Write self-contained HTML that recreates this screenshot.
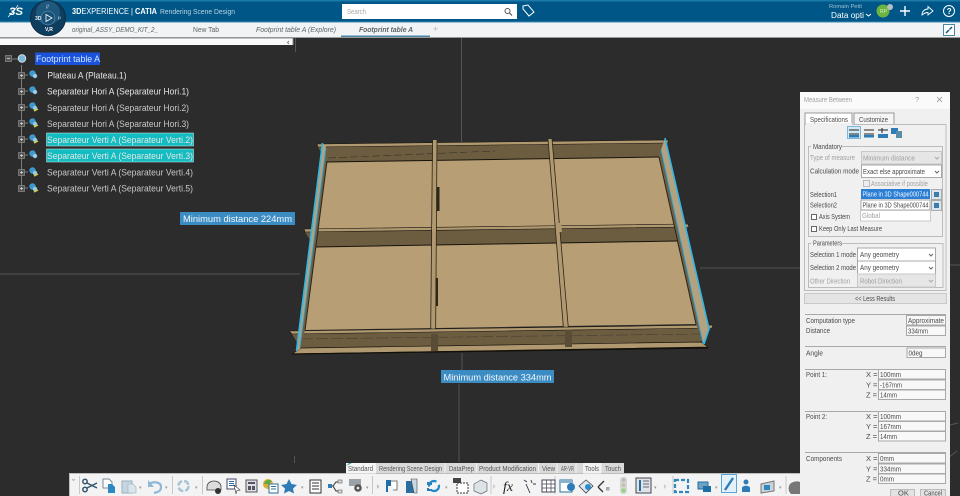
<!DOCTYPE html>
<html><head><meta charset="utf-8"><style>
html,body{margin:0;padding:0;width:960px;height:496px;overflow:hidden;background:#2c2c2c}
svg{display:block;filter:blur(.35px);font-family:"Liberation Sans",sans-serif;font-size:8px}
.t{fill:#e6e6e6;font-size:9.5px}
.d{fill:#4a4a4a;font-size:7.5px}
.g{fill:#a0a0a0;font-size:7.5px}
.i{fill:#5d6468;font-style:italic;font-size:7.5px}
.tb{fill:#555;font-size:7px}
.f{fill:#fff;stroke:#a8a8a8;stroke-width:1}
.dis{fill:#e6e6e6;stroke:#c8c8c8;stroke-width:1}
.sep{stroke:#a8a8a8;stroke-width:1}
</style></head><body>
<svg width="960" height="496" viewBox="0 0 960 496" xmlns="http://www.w3.org/2000/svg">
<rect width="960" height="496" fill="#2c2c2c"/>
<!-- viewport axes -->
<g stroke="#555" stroke-width="1" fill="none">
<path d="M461.500 38V142M462 353V370M459 384V462M294.500 456V463"/>
<path d="M0 274H300M700 268H800M945 265H960"/>
<path d="M295.500 38V52M950 425l8-2M948 458l9-7"/>
</g>
<!-- header -->
<rect width="960" height="22" fill="#005686"/>
<rect width="960" height="1.500" fill="#1a7aa8"/>
<rect y="22" width="960" height="15" fill="#f1f3f5"/>
<rect y="21.500" width="960" height="1" fill="#3e8fb5"/>
<rect y="37" width="960" height="1" fill="#9a9a9a"/>
<rect y="38" width="293" height="7" fill="#fafafa"/>
<path d="M0 38H293V45" fill="none" stroke="#8c8c8c"/>
<path d="M289 41l-1.500 1.500 1.500 1.500" stroke="#555" fill="none" stroke-width=".7"/>
<!-- 3DS logo -->
<text x="9" y="15" fill="#fff" font-size="11" font-style="italic" font-weight="bold" textLength="14" lengthAdjust="spacingAndGlyphs">3S</text>
<path d="M8 17c3-3 8-8 10-12" stroke="#fff" fill="none" stroke-width=".8"/>
<!-- compass -->
<circle cx="48" cy="18" r="17.500" fill="#0f3d5e" stroke="#0a2c46"/>
<circle cx="48" cy="13" r="12" fill="#2a6b93" opacity=".6"/>
<circle cx="48" cy="18" r="7" fill="#184f75" stroke="#6fa5c4" stroke-width=".5"/>
<path d="M46 14.500v7l6-3.500z" fill="none" stroke="#fff" stroke-width=".8"/>
<text x="35" y="20" fill="#e4eef4" font-size="5" font-weight="bold">3D</text>
<text x="58" y="20" fill="#e4eef4" font-size="5">i³</text>
<text x="46" y="8.500" fill="#cfe0ea" font-size="5">//</text>
<text x="45" y="31" fill="#fff" font-size="5" font-weight="bold">V,R</text>
<!-- top texts -->
<text x="72" y="14" fill="#fff" font-size="8" textLength="85" lengthAdjust="spacingAndGlyphs"><tspan font-weight="bold">3D</tspan>EXPERIENCE | <tspan font-weight="bold">CATIA</tspan></text>
<text x="160" y="14" fill="#b9d3e2" font-size="7.500" textLength="75" lengthAdjust="spacingAndGlyphs">Rendering Scene Design</text>
<rect x="342" y="4" width="175" height="15" fill="#fff"/>
<text x="347" y="14" fill="#a8a8a8" font-size="7" textLength="19" lengthAdjust="spacingAndGlyphs">Search</text>
<circle cx="507.500" cy="11" r="2.500" fill="none" stroke="#555" stroke-width="1"/><path d="M509.500 13l2.500 2.500" stroke="#555" stroke-width="1.200"/>
<path d="M523 6l5-1 6 7-5 4-6-7z" fill="none" stroke="#fff" stroke-width="1"/>
<text x="829" y="8" fill="#9fc2d6" font-size="5" textLength="33" lengthAdjust="spacingAndGlyphs">Romain Petit</text>
<text x="831" y="18" fill="#fff" font-size="8" textLength="33" lengthAdjust="spacingAndGlyphs">Data opti</text>
<path d="M866 14l2.500 2 2.500-2" stroke="#fff" fill="none"/>
<circle cx="883" cy="11" r="6.500" fill="#6db33f"/>
<text x="880" y="13" fill="#d5ecc4" font-size="5">RP</text>
<circle cx="890" cy="7" r="3" fill="#b8c0c4"/>
<path d="M905 6v10M900 11h10" stroke="#fff" stroke-width="1.400"/>
<path d="M922 15c0-4 3-6 6-6V6.500l5 4.500-5 4V12.500c-3 0-4 1-6 2.500z" fill="none" stroke="#fff" stroke-width=".9"/>
<circle cx="949" cy="11" r="5.500" fill="none" stroke="#fff" stroke-width="1"/>
<text x="946.800" y="14" fill="#fff" font-size="8" font-weight="bold">?</text>
<!-- tabs -->
<text class="i" x="72" y="32" textLength="86" lengthAdjust="spacingAndGlyphs">original_ASSY_DEMO_KIT_2_</text>
<text x="193" y="32" fill="#5d6468" font-size="7.500" textLength="26" lengthAdjust="spacingAndGlyphs">New Tab</text>
<text class="i" x="256" y="32" textLength="80" lengthAdjust="spacingAndGlyphs">Footprint table A (Explore)</text>
<text class="i" x="359" y="32" font-weight="bold" textLength="54" lengthAdjust="spacingAndGlyphs">Footprint table A</text>
<text x="433" y="32" fill="#b5b5b5" font-size="9">+</text>
<rect x="341" y="35.500" width="89" height="1.500" fill="#4a86a8"/>
<rect x="943.500" y="24.500" width="11" height="11" fill="#fff" stroke="#4a86a8"/>
<path d="M946 33l3-3M952 27l-2.500 2.500" stroke="#0b5a8a" stroke-width="1.500"/>
<!-- tree -->
<g stroke="#7a7a7a" stroke-width="1" fill="none">
<path d="M21.500 65V188M21.500 75H28M21.500 91H28M21.500 107H28M21.500 123H28M21.500 139H28M21.500 155H28M21.500 172H28M21.500 188H28M12 59H18"/>
</g>
<g fill="#555" stroke="#9a9a9a" stroke-width=".6">
<rect x="5.500" y="55.500" width="6" height="6"/>
<rect x="18.500" y="72.500" width="6" height="6"/><rect x="18.500" y="88.500" width="6" height="6"/><rect x="18.500" y="104.500" width="6" height="6"/><rect x="18.500" y="120.500" width="6" height="6"/><rect x="18.500" y="136.500" width="6" height="6"/><rect x="18.500" y="152.500" width="6" height="6"/><rect x="18.500" y="169.500" width="6" height="6"/><rect x="18.500" y="185.500" width="6" height="6"/>
</g>
<path d="M7 58.500h3M20 75.500h3M21.500 74v3M20 91.500h3M21.500 90v3M20 107.500h3M21.500 106v3M20 123.500h3M21.500 122v3M20 139.500h3M21.500 138v3M20 155.500h3M21.500 154v3M20 172.500h3M21.500 171v3M20 188.500h3M21.500 187v3" stroke="#ddd" stroke-width=".7"/>
<circle cx="22" cy="58.500" r="3.800" fill="#7fb7d8" stroke="#dfeef6" stroke-width=".8"/>
<g>
<circle cx="32.500" cy="73.500" r="3.200" fill="#3f98cc"/><circle cx="35" cy="76" r="2.200" fill="#9acbe6"/>
<circle cx="32.500" cy="89.500" r="3.200" fill="#3f98cc"/><circle cx="35" cy="92" r="2.200" fill="#9acbe6"/>
<circle cx="32.500" cy="105.500" r="3.200" fill="#3f98cc"/><circle cx="35" cy="108" r="2.200" fill="#9acbe6"/><path d="M34 111l4-2" stroke="#d9cf3a" stroke-width="1.500"/>
<circle cx="32.500" cy="121.500" r="3.200" fill="#3f98cc"/><circle cx="35" cy="124" r="2.200" fill="#9acbe6"/><path d="M34 127l4-2" stroke="#d9cf3a" stroke-width="1.500"/>
<circle cx="32.500" cy="137.500" r="3.200" fill="#3f98cc"/><circle cx="35" cy="140" r="2.200" fill="#9acbe6"/><path d="M34 143l4-2" stroke="#d9cf3a" stroke-width="1.500"/>
<circle cx="32.500" cy="153.500" r="3.200" fill="#3f98cc"/><circle cx="35" cy="156" r="2.200" fill="#9acbe6"/>
<circle cx="32.500" cy="170.500" r="3.200" fill="#3f98cc"/><circle cx="35" cy="173" r="2.200" fill="#9acbe6"/><path d="M34 176l4-2" stroke="#d9cf3a" stroke-width="1.500"/>
<circle cx="32.500" cy="186.500" r="3.200" fill="#3f98cc"/><circle cx="35" cy="189" r="2.200" fill="#9acbe6"/><path d="M34 192l4-2" stroke="#d9cf3a" stroke-width="1.500"/>
</g>
<rect x="35" y="52.500" width="65" height="12.500" fill="#1b52dc"/>
<rect x="46.500" y="133" width="147" height="13" fill="#12bcc0" stroke="#d8f2f2" stroke-width=".5"/>
<rect x="46.500" y="149" width="147" height="13" fill="#12bcc0" stroke="#d8f2f2" stroke-width=".5"/>
<text class="t" x="36" y="62" style="fill:#cfe6ff" textLength="64" lengthAdjust="spacingAndGlyphs">Footprint table A</text>
<text class="t" x="47.500" y="78.500" textLength="79" lengthAdjust="spacingAndGlyphs">Plateau A (Plateau.1)</text>
<text class="t" x="47" y="94.500" textLength="142" lengthAdjust="spacingAndGlyphs">Separateur Hori A (Separateur Hori.1)</text>
<text class="t" x="47" y="111" style="fill:#c8c8c8" textLength="142" lengthAdjust="spacingAndGlyphs">Separateur Hori A (Separateur Hori.2)</text>
<text class="t" x="47" y="127" style="fill:#c8c8c8" textLength="142" lengthAdjust="spacingAndGlyphs">Separateur Hori A (Separateur Hori.3)</text>
<text class="t" x="47" y="143" textLength="146" lengthAdjust="spacingAndGlyphs">Separateur Verti A (Separateur Verti.2)</text>
<text class="t" x="47" y="159" textLength="146" lengthAdjust="spacingAndGlyphs">Separateur Verti A (Separateur Verti.3)</text>
<text class="t" x="47" y="175.500" style="fill:#c8c8c8" textLength="146" lengthAdjust="spacingAndGlyphs">Separateur Verti A (Separateur Verti.4)</text>
<text class="t" x="47" y="191.500" style="fill:#c8c8c8" textLength="146" lengthAdjust="spacingAndGlyphs">Separateur Verti A (Separateur Verti.5)</text>
<!-- MODEL -->
<g stroke-linejoin="round">
<!-- floors -->
<polygon points="327,161 659,157 674,224 318,230" fill="#b89e74"/>
<polygon points="315,246 677,241 696,324 305,330" fill="#b89e74"/>
<!-- back wall -->
<polygon points="318,147 668,143 659,157 327,162" fill="#6c5d41"/>
<polygon points="317,144 668,140 668,143 318,147" fill="#b09970" stroke="#17130c" stroke-width=".5"/>
<path d="M327 162L659 157" stroke="#17130c" stroke-width="1"/>
<path d="M328 158L495 151" stroke="#3a3224" stroke-width=".6" stroke-dasharray="8 3"/>
<!-- middle wall -->
<polygon points="305,232 688,227 677,241 315,247" fill="#6c5d41"/>
<polygon points="304,229 688,224 689,227 305,232" fill="#b09970" stroke="#17130c" stroke-width=".6"/>
<path d="M315 247L677 241" stroke="#17130c" stroke-width="1"/>
<!-- separators -->
<polygon points="433,140 437,140 435,350 431,350" fill="#b09970"/>
<path d="M432.500 140L430.500 350M437 140L435.500 350" stroke="#2b2416" stroke-width=".8"/>
<rect x="437" y="187" width="2.500" height="24" fill="#2d2719"/>
<rect x="435.500" y="278" width="2.500" height="28" fill="#2d2719"/>
<polygon points="548,139 552,139 570,347 565,347" fill="#b09970"/>
<path d="M548 139L565 347M552 139L570 347" stroke="#2b2416" stroke-width=".8"/>
<!-- front wall -->
<polygon points="292,334 711,328 700,343 301,349" fill="#6c5d41"/>
<polygon points="289,331 713,325 712,328 292,334" fill="#b09970" stroke="#17130c" stroke-width=".6"/>
<polygon points="301,348 701,342 708,347 292,354" fill="#b09970" stroke="#17130c" stroke-width=".7"/>
<path d="M301 339L700 334" stroke="#4a4030" stroke-width=".6" stroke-dasharray="12 3"/>
<path d="M292 354L708 348" stroke="#120f08" stroke-width="1.200"/>
<polygon points="431,334 438,334 438,351 431,351" fill="#5a4d35"/>
<polygon points="565,330 572,330 572,347 565,347" fill="#5a4d35"/>
<polygon points="432,224 436,224 436,232 432,232" fill="#b09970"/>
<polygon points="557,223 561,223 562,232 558,232" fill="#b09970"/>
<!-- left side wall -->
<polygon points="322,143 327,161 305,330 300,350 296,351" fill="#6f6047"/>
<polygon points="322,143 326,146 300,349 296,351" fill="#b3a17f"/>
<path d="M322.500 143L296.500 351" stroke="#2fb7e6" stroke-width="1.600" fill="none"/>
<path d="M326 148L300 347" stroke="#22a4d4" stroke-width=".9" fill="none"/>
<path d="M327 161L305 330" stroke="#2b2416" stroke-width="1" fill="none"/>
<!-- right side wall -->
<polygon points="660,150 665,138 709,329 704,344 696,324 659,157" fill="#6f6047"/>
<polygon points="665,138 661,150 703,344 709,329" fill="#b3a17f"/>
<path d="M665 138L709 329L704 344" stroke="#2fb7e6" stroke-width="1.600" fill="none"/>
<path d="M661 150L703 344" stroke="#22a4d4" stroke-width=".9" fill="none"/>
<path d="M659 157L696 324" stroke="#2b2416" stroke-width="1" fill="none"/>
</g>
<!-- labels -->
<rect x="180" y="212" width="115" height="13" fill="#3c8cc4"/>
<text x="183" y="222" fill="#f4f8fb" font-size="9.500" textLength="109" lengthAdjust="spacingAndGlyphs">Minimum distance 224mm</text>
<rect x="441" y="370" width="113" height="13" fill="#3c8cc4"/>
<text x="443.500" y="380.500" fill="#f4f8fb" font-size="9.500" textLength="108" lengthAdjust="spacingAndGlyphs">Minimum distance 334mm</text>
<!-- toolbar -->
<rect x="69" y="473" width="731" height="23" fill="#f3f3f3"/>
<rect x="69.500" y="473.500" width="731" height="30" fill="none" stroke="#bdbdbd"/>
<rect x="376" y="463" width="248" height="10" fill="#d9d9d9"/>
<rect x="346" y="463" width="30" height="10.500" fill="#f5f5f5"/>
<rect x="583" y="463" width="18" height="10.500" fill="#f2f2f2"/>
<path d="M346 466l3-3h3z" fill="#3c9ea8"/>
<path d="M445 463v10M476.500 463v10M538.500 463v10M557 463v10M576 463v10M601 463v10" stroke="#f4f4f4" stroke-width="1"/>
<text class="tb" x="348" y="471" textLength="25" lengthAdjust="spacingAndGlyphs">Standard</text>
<text class="tb" x="379" y="471" textLength="63" lengthAdjust="spacingAndGlyphs">Rendering Scene Design</text>
<text class="tb" x="449" y="471" textLength="25" lengthAdjust="spacingAndGlyphs">DataPrep</text>
<text class="tb" x="479" y="471" textLength="57" lengthAdjust="spacingAndGlyphs">Product Modification</text>
<text class="tb" x="542" y="471" textLength="13" lengthAdjust="spacingAndGlyphs">View</text>
<text class="tb" x="561" y="471" textLength="13" lengthAdjust="spacingAndGlyphs">AR-VR</text>
<text class="tb" x="585" y="471" textLength="14" lengthAdjust="spacingAndGlyphs">Tools</text>
<text class="tb" x="605" y="471" textLength="16" lengthAdjust="spacingAndGlyphs">Touch</text>
<!-- toolbar icons -->
<path d="M72 479l1.500 1.500 1.500-1.500" stroke="#999" fill="none" stroke-width=".7"/>
<g stroke="#c8c8c8"><path d="M79.500 476V494M172.500 476V494M202.500 476V494M372.500 476V494M491 476V494M555 476V494M673 476V494M786 476V494"/></g>
<g fill="none" stroke="#34566e" stroke-width="1.500"><circle cx="85" cy="481.500" r="2.200"/><circle cx="85" cy="489.500" r="2.200"/><path d="M87 483l10 5M87 488l10-5"/></g>
<path d="M103 479h6l3 3v6h-9z" fill="#fff" stroke="#7a8a96"/><path d="M108 484h4l3 3v6h-7z" fill="#2d89c4"/>
<rect x="122" y="481" width="10" height="12" fill="#c6d5e0" stroke="#9aaebb"/><path d="M128 484h5l3 3v6h-8z" fill="#d9e4ec" stroke="#9aaebb" stroke-width=".6"/><text x="139" y="489" fill="#999" font-size="5">▾</text>
<path d="M149 484c5-3 12-2 12 3s-4 5-7 6" fill="none" stroke="#8fb8d8" stroke-width="2.200"/><path d="M148 480v7h6z" fill="#8fb8d8"/><text x="165" y="489" fill="#999" font-size="5">▾</text>
<circle cx="183.500" cy="486" r="5" fill="none" stroke="#a8c4d8" stroke-width="2.500" stroke-dasharray="6 2"/><text x="195" y="489" fill="#999" font-size="5">▾</text>
<path d="M207 487c0-8 14-8 14 0v3h-14z" fill="#dcdcdc" stroke="#444" stroke-width=".8"/><circle cx="218" cy="491" r="3" fill="#333"/>
<rect x="227" y="479" width="9" height="10" fill="#fff" stroke="#446"/><path d="M229 481.500h5M229 483.500h5M229 485.500h5" stroke="#2d6e9a"/><path d="M234 485l6 5-3 .5-1 3z" fill="#fff" stroke="#333" stroke-width=".6"/>
<rect x="246" y="480" width="11" height="12" fill="#dde" stroke="#555"/><path d="M248 482h7v2h-7zM248 486h3v4h-3zM252 486h3v4h-3z" fill="#555"/>
<circle cx="268" cy="484" r="5" fill="#d8b030"/><path d="M264 484a5 5 0 0 1 8-3l-4 3z" fill="#5aa84a"/><rect x="269" y="484" width="9" height="9" fill="#fff" stroke="#2d6e9a"/><path d="M271 486.500h5M271 489h5" stroke="#2d6e9a"/>
<path d="M289 479l2.500 5 5.500 1-4 3.500 1 5-5-2.500-5 2.500 1-5-4-3.500 5.500-1z" fill="#2d7cb8"/><text x="301" y="489" fill="#999" font-size="5">▾</text>
<rect x="310" y="480" width="11" height="13" fill="#fff" stroke="#333"/><path d="M312 483h7M312 486h7M312 489h7" stroke="#333"/>
<path d="M329 486h4l3-4h5M333 486l3 5h5" fill="none" stroke="#333"/><rect x="328" y="484" width="4" height="4" fill="#2d7cb8"/><rect x="338" y="480" width="4" height="3" fill="#ddd" stroke="#444" stroke-width=".5"/><rect x="338" y="490" width="4" height="3" fill="#ddd" stroke="#444" stroke-width=".5"/>
<rect x="349" y="479" width="12" height="7" fill="#9aa2a8"/><circle cx="358" cy="488" r="3.800" fill="#555"/><circle cx="358" cy="488" r="1.300" fill="#f3f3f3"/><text x="366" y="489" fill="#999" font-size="5">▾</text><path d="M377 484v5l2.500-2.500z" fill="#bbb"/>
<path d="M386 480h5v6h-3v6h-2z" fill="#1f70a8"/><path d="M391 481h6v9h-4" fill="#fff" stroke="#555" stroke-width=".8"/>
<path d="M406 481h8v12h-8z" fill="#2a6e9e"/><path d="M411 479h6v14h-3z" fill="#c6d8e4" stroke="#444" stroke-width=".6"/>
<path d="M428 482v2h4M428 488v2h4" stroke="#2d7cb8" stroke-width="2" fill="none"/>
<circle cx="434" cy="486" r="5" fill="none" stroke="#1e88c8" stroke-width="2.200" stroke-dasharray="11 4"/><text x="445" y="489" fill="#999" font-size="5">▾</text>
<rect x="453" y="478" width="8" height="5" fill="#444"/><rect x="457" y="483" width="11" height="10" fill="#fff" stroke="#333" stroke-dasharray="2 1"/>
<path d="M474 484l7-4 6 3v8l-6 3-7-3z" fill="#dde4e8" stroke="#667" stroke-width=".7"/><path d="M493 484v5l2.500-2.500z" fill="#ccc"/>
<text x="503" y="491" fill="#222" font-family="Liberation Serif" font-size="14" font-style="italic">fx</text>
<path d="M526 484l4 9M527 482l-3-2M531 480l1 3M533 484l3 0" stroke="#334" stroke-width=".9" fill="none"/>
<rect x="542" y="480" width="13" height="12" fill="#fff" stroke="#445"/><path d="M542 484h13M542 488h13M546.500 480v12M551 480v12" stroke="#445" stroke-width=".7"/>
<rect x="560" y="480" width="12" height="12" fill="#fff" stroke="#2d6e9a"/><rect x="560" y="480" width="12" height="3" fill="#8ab2cc"/><circle cx="571" cy="487" r="4" fill="#2d7cb8"/>
<path d="M579 486l7-6 7 6-7 7z" fill="#dfe7ec" stroke="#445" stroke-width=".8"/><circle cx="588" cy="487" r="3" fill="#2a8cc8"/>
<path d="M598 487l6-6M598 487l5 5" stroke="#333" stroke-width="1.300" fill="none"/><rect x="606" y="487" width="3.500" height="3.500" fill="#aaa"/>
<rect x="620" y="477" width="7" height="17" rx="3" fill="#d5d5d5"/><circle cx="623.500" cy="480" r="1.800" fill="#bbb"/><circle cx="623.500" cy="485" r="1.800" fill="#c4c0a0"/><circle cx="623.500" cy="490.500" r="2" fill="#8ed67a"/>
<rect x="636" y="478" width="15" height="15" fill="#dfe3e6" stroke="#445"/><path d="M640 480v11" stroke="#1f6ea6" stroke-width="2"/><path d="M643 481h6M643 484h6M643 487h6" stroke="#667"/><text x="654" y="489" fill="#999" font-size="5">▾</text><path d="M664 484v5l2.500-2.500z" fill="#ccc"/>
<g fill="none" stroke="#2d88c0" stroke-width="2.200" stroke-dasharray="4 2"><rect x="675" y="480" width="13" height="12"/></g>
<rect x="698" y="482" width="10" height="7" fill="#6fa3c4" stroke="#1f6ea6"/><rect x="703" y="486" width="8" height="6" fill="#1f6ea6"/><text x="715" y="489" fill="#999" font-size="5">▾</text>
<rect x="721.500" y="474.500" width="15" height="18" fill="#e3f1fa" stroke="#5aa7d6"/><path d="M725 490l8-12" stroke="#2d7cb8" stroke-width="2.400"/>
<circle cx="746" cy="482" r="2.500" fill="#2d7cb8"/><path d="M742 492v-4c0-3 8-3 8 0v4z" fill="#2d7cb8"/>
<path d="M761 484l13-3v10l-13 2z" fill="#c8d2d8" stroke="#777"/><rect x="764" y="485" width="6" height="5" fill="#2d88c0"/><text x="779" y="489" fill="#999" font-size="5">▾</text>
<path d="M790 484c3-3 8-3 10-2v12h-9c-3-3-3-7-1-10z" fill="#777"/>
<!-- dialog -->
<rect x="800" y="92" width="150" height="404" fill="#f0f0f0"/>
<rect x="800" y="92" width="150" height="17" fill="#fafafa"/>
<text class="g" x="804" y="102" textLength="48" lengthAdjust="spacingAndGlyphs">Measure Between</text>
<text class="g" x="915" y="102">?</text>
<path d="M937 97l5 5M942 97l-5 5" stroke="#888" stroke-width=".7"/>
<path d="M804.500 124.500V290.500H946V124.500H853" fill="none" stroke="#bbb"/>
<path d="M805 125V113h47v12" fill="#fff" stroke="#999"/>
<path d="M854 124V113h40v11" fill="#f5f5f5" stroke="#999"/>
<rect x="805.500" y="123" width="46.500" height="3" fill="#f0f0f0"/>
<text class="d" x="810" y="122" textLength="38" lengthAdjust="spacingAndGlyphs">Specifications</text>
<text class="d" x="859" y="122" textLength="29" lengthAdjust="spacingAndGlyphs">Customize</text>
<rect x="847.500" y="126.500" width="13" height="12" fill="#d4e9f6" stroke="#7fb5d8"/>
<path d="M849 130h10M849 134h10" stroke="#222" stroke-width="1"/><rect x="849" y="135" width="10" height="2.500" fill="#2d7cb8"/>
<path d="M864 130h10M864 134h10" stroke="#222" stroke-width="1"/><rect x="864" y="135" width="10" height="2.500" fill="#2d7cb8"/>
<path d="M878 130h10M882 128v5" stroke="#222" stroke-width="1"/><rect x="878" y="134" width="10" height="4" fill="#2d7cb8"/>
<rect x="891" y="128" width="7" height="6" fill="#2d7cb8"/><rect x="896" y="131" width="6" height="7" fill="#5a8ca8"/>
<path d="M811 146.500H808.500V236.500H942.500V146.500H842" fill="none" stroke="#bbb"/>
<text class="d" x="813" y="149" textLength="29" lengthAdjust="spacingAndGlyphs">Mandatory</text>
<text class="g" x="810" y="160" textLength="45" lengthAdjust="spacingAndGlyphs">Type of measure</text>
<rect class="dis" x="861.500" y="151.500" width="80" height="12.500"/>
<text class="g" x="863" y="160.500" textLength="52" lengthAdjust="spacingAndGlyphs">Minimum distance</text>
<path d="M935 157l2 2 2-2" stroke="#aaa" fill="none"/>
<text class="d" x="810" y="173.500" textLength="49" lengthAdjust="spacingAndGlyphs">Calculation mode</text>
<rect class="f" x="861.500" y="165" width="80" height="12.500"/>
<text class="d" x="863" y="174" textLength="62" lengthAdjust="spacingAndGlyphs">Exact else approximate</text>
<path d="M935 171l2 2 2-2" stroke="#666" fill="none"/>
<rect x="863.500" y="180.500" width="6" height="6" fill="#eee" stroke="#bbb"/>
<text class="g" x="871" y="186" textLength="57" lengthAdjust="spacingAndGlyphs">Associative if possible</text>
<text class="d" x="810" y="197" textLength="27" lengthAdjust="spacingAndGlyphs">Selection1</text>
<rect x="861" y="189" width="69" height="10" fill="#2a7fd4"/>
<text x="862.500" y="196.500" fill="#f2f7ff" font-size="7" textLength="66" lengthAdjust="spacingAndGlyphs">Plane in 3D Shape000744</text>
<rect x="931.500" y="189.500" width="10" height="10" fill="#d9e6ef" stroke="#aaa"/><rect x="934" y="192" width="5" height="5" fill="#3c7da8"/>
<text class="d" x="810" y="207.500" textLength="27" lengthAdjust="spacingAndGlyphs">Selection2</text>
<rect class="f" x="861" y="200" width="69" height="10"/>
<text class="d" x="862.500" y="207.500" font-size="7" textLength="66" lengthAdjust="spacingAndGlyphs">Plane in 3D Shape000744</text>
<rect x="931.500" y="200.500" width="10" height="10" fill="#d9e6ef" stroke="#aaa"/><rect x="934" y="203" width="5" height="5" fill="#3c7da8"/>
<rect x="811.500" y="214.500" width="5" height="5" fill="#fff" stroke="#666"/>
<text class="d" x="819" y="219" textLength="31" lengthAdjust="spacingAndGlyphs">Axis System</text>
<rect x="860.500" y="210.500" width="70" height="10.500" fill="#fff" stroke="#c8c8c8"/>
<text class="g" x="862" y="218" textLength="18" lengthAdjust="spacingAndGlyphs">Global</text>
<rect x="811.500" y="226.500" width="5" height="5" fill="#fff" stroke="#666"/>
<text class="d" x="819" y="231" textLength="63" lengthAdjust="spacingAndGlyphs">Keep Only Last Measure</text>
<path d="M811 243.500H808.500V287.500H943V243.500H842" fill="none" stroke="#bbb"/>
<text class="d" x="813" y="245.500" textLength="29" lengthAdjust="spacingAndGlyphs">Parameters</text>
<text class="d" x="810" y="257" textLength="46" lengthAdjust="spacingAndGlyphs">Selection 1 mode</text>
<rect class="f" x="857.500" y="248" width="78" height="13"/>
<text class="d" x="860" y="257" textLength="39" lengthAdjust="spacingAndGlyphs">Any geometry</text>
<path d="M929 254l2 2 2-2" stroke="#666" fill="none"/>
<text class="d" x="810" y="270" textLength="46" lengthAdjust="spacingAndGlyphs">Selection 2 mode</text>
<rect class="f" x="857.500" y="261" width="78" height="13"/>
<text class="d" x="860" y="270" textLength="39" lengthAdjust="spacingAndGlyphs">Any geometry</text>
<path d="M929 267l2 2 2-2" stroke="#666" fill="none"/>
<text class="g" x="810" y="283.500" textLength="40" lengthAdjust="spacingAndGlyphs">Other Direction</text>
<rect class="dis" x="857.500" y="274" width="78" height="13"/>
<text class="g" x="860" y="283.500" textLength="42" lengthAdjust="spacingAndGlyphs">Robot Direction</text>
<path d="M929 280l2 2 2-2" stroke="#aaa" fill="none"/>
<rect x="804.500" y="293.500" width="142" height="10" fill="#e4e4e4" stroke="#c8c8c8"/>
<text class="d" x="855" y="301" textLength="40" lengthAdjust="spacingAndGlyphs">&lt;&lt; Less Results</text>
<path class="sep" d="M805 314.500H946M805 346.500H946M805 369.500H946M805 411.500H946M805 452.500H946"/>
<text class="d" x="806" y="323" textLength="49" lengthAdjust="spacingAndGlyphs">Computation type</text>
<rect class="f" x="906.500" y="315.500" width="39" height="9.500" style="fill:#f8f8f8"/>
<text class="d" x="908" y="323" font-size="7" textLength="36" lengthAdjust="spacingAndGlyphs">Approximate</text>
<text class="d" x="806" y="333" textLength="24" lengthAdjust="spacingAndGlyphs">Distance</text>
<rect class="f" x="906.500" y="326" width="39" height="9.500" style="fill:#f8f8f8"/>
<text class="d" x="908" y="333.500" font-size="7" textLength="20" lengthAdjust="spacingAndGlyphs">334mm</text>
<text class="d" x="806" y="355.500" textLength="17" lengthAdjust="spacingAndGlyphs">Angle</text>
<rect class="f" x="907" y="348" width="38.500" height="9.500" style="fill:#f8f8f8"/>
<text class="d" x="908.500" y="355.500" font-size="7" textLength="14" lengthAdjust="spacingAndGlyphs">0deg</text>
<text class="d" x="806" y="377" textLength="21" lengthAdjust="spacingAndGlyphs">Point 1:</text>
<text class="d" x="806" y="419" textLength="21" lengthAdjust="spacingAndGlyphs">Point 2:</text>
<text class="d" x="806" y="461" textLength="36" lengthAdjust="spacingAndGlyphs">Components</text>
<rect class="f" x="878.500" y="369.500" width="67" height="9.500" style="fill:#f8f8f8"/><rect class="f" x="878.500" y="380" width="67" height="9.500" style="fill:#f8f8f8"/><rect class="f" x="878.500" y="390" width="67" height="9.500" style="fill:#f8f8f8"/>
<rect class="f" x="878.500" y="411.500" width="67" height="9.500" style="fill:#f8f8f8"/><rect class="f" x="878.500" y="421.500" width="67" height="9.500" style="fill:#f8f8f8"/><rect class="f" x="878.500" y="431.500" width="67" height="9.500" style="fill:#f8f8f8"/>
<rect class="f" x="878.500" y="453.500" width="67" height="9.500" style="fill:#f8f8f8"/><rect class="f" x="878.500" y="464" width="67" height="9.500" style="fill:#f8f8f8"/><rect class="f" x="878.500" y="474" width="67" height="9.500" style="fill:#f8f8f8"/>
<text class="d" x="866" y="377">X =</text><text class="d" x="866" y="387.500">Y =</text><text class="d" x="866" y="397.500">Z =</text>
<text class="d" x="866" y="419">X =</text><text class="d" x="866" y="429">Y =</text><text class="d" x="866" y="439">Z =</text>
<text class="d" x="866" y="461">X =</text><text class="d" x="866" y="471.500">Y =</text><text class="d" x="866" y="481.500">Z =</text>
<text class="d" x="880" y="377" textLength="21" lengthAdjust="spacingAndGlyphs">100mm</text>
<text class="d" x="880" y="387.500" textLength="22" lengthAdjust="spacingAndGlyphs">-167mm</text>
<text class="d" x="880" y="397.500" textLength="17" lengthAdjust="spacingAndGlyphs">14mm</text>
<text class="d" x="880" y="419" textLength="21" lengthAdjust="spacingAndGlyphs">100mm</text>
<text class="d" x="880" y="429" textLength="21" lengthAdjust="spacingAndGlyphs">167mm</text>
<text class="d" x="880" y="439" textLength="17" lengthAdjust="spacingAndGlyphs">14mm</text>
<text class="d" x="880" y="461" textLength="14" lengthAdjust="spacingAndGlyphs">0mm</text>
<text class="d" x="880" y="471.500" textLength="21" lengthAdjust="spacingAndGlyphs">334mm</text>
<text class="d" x="880" y="481.500" textLength="14" lengthAdjust="spacingAndGlyphs">0mm</text>
<rect x="890.500" y="489.500" width="24" height="9" fill="#e2e2e2" stroke="#bbb"/>
<text class="d" x="898" y="495.500">OK</text>
<rect x="920.500" y="489.500" width="25" height="9" fill="#e2e2e2" stroke="#bbb"/>
<text class="d" x="924" y="495.500" textLength="18" lengthAdjust="spacingAndGlyphs">Cancel</text>
</svg>
</body></html>
